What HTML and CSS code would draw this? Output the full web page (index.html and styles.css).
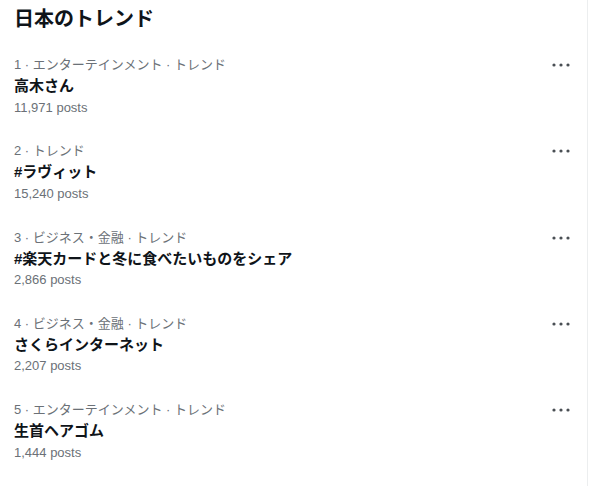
FILE: index.html
```html
<!DOCTYPE html>
<html lang="ja">
<head>
<meta charset="utf-8">
<title>日本のトレンド</title>
<link rel="stylesheet" href="styles.css">
</head>
<body>
<main class="panel">
  <h2 class="panel-title">日本のトレンド</h2>
  <ul class="trends">
    <li class="trend">
      <div class="trend-body">
        <div class="trend-meta">1 · エンターテインメント · トレンド</div>
        <div class="trend-name">高木さん</div>
        <div class="trend-count">11,971 posts</div>
      </div>
      <button class="more" aria-label="その他"><svg viewBox="0 0 18 4" width="18" height="4"><circle cx="2" cy="2" r="1.6"/><circle cx="9" cy="2" r="1.6"/><circle cx="16" cy="2" r="1.6"/></svg></button>
    </li>
    <li class="trend">
      <div class="trend-body">
        <div class="trend-meta">2 · トレンド</div>
        <div class="trend-name">#ラヴィット</div>
        <div class="trend-count">15,240 posts</div>
      </div>
      <button class="more" aria-label="その他"><svg viewBox="0 0 18 4" width="18" height="4"><circle cx="2" cy="2" r="1.6"/><circle cx="9" cy="2" r="1.6"/><circle cx="16" cy="2" r="1.6"/></svg></button>
    </li>
    <li class="trend">
      <div class="trend-body">
        <div class="trend-meta">3 · ビジネス・金融 · トレンド</div>
        <div class="trend-name">#楽天カードと冬に食べたいものをシェア</div>
        <div class="trend-count">2,866 posts</div>
      </div>
      <button class="more" aria-label="その他"><svg viewBox="0 0 18 4" width="18" height="4"><circle cx="2" cy="2" r="1.6"/><circle cx="9" cy="2" r="1.6"/><circle cx="16" cy="2" r="1.6"/></svg></button>
    </li>
    <li class="trend">
      <div class="trend-body">
        <div class="trend-meta">4 · ビジネス・金融 · トレンド</div>
        <div class="trend-name">さくらインターネット</div>
        <div class="trend-count">2,207 posts</div>
      </div>
      <button class="more" aria-label="その他"><svg viewBox="0 0 18 4" width="18" height="4"><circle cx="2" cy="2" r="1.6"/><circle cx="9" cy="2" r="1.6"/><circle cx="16" cy="2" r="1.6"/></svg></button>
    </li>
    <li class="trend">
      <div class="trend-body">
        <div class="trend-meta">5 · エンターテインメント · トレンド</div>
        <div class="trend-name">生首ヘアゴム</div>
        <div class="trend-count">1,444 posts</div>
      </div>
      <button class="more" aria-label="その他"><svg viewBox="0 0 18 4" width="18" height="4"><circle cx="2" cy="2" r="1.6"/><circle cx="9" cy="2" r="1.6"/><circle cx="16" cy="2" r="1.6"/></svg></button>
    </li>
  </ul>
</main>
</body>
</html>
```
FILE: styles.css
```css
html, body {
  margin: 0;
  padding: 0;
  background: #ffffff;
}

body {
  font-family: "Liberation Sans", "Noto Sans CJK JP", sans-serif;
  color: #0f1419;
}

.panel {
  width: 588px;
  min-height: 486px;
  box-sizing: border-box;
  border-right: 1px solid #eceeef;
}

.panel-title {
  margin: 0;
  padding: 7px 14px 11px;
  font-size: 20px;
  line-height: 24px;
  font-weight: 700;
}

.trends {
  list-style: none;
  margin: 0;
  padding: 0;
}

.trend {
  display: flex;
  align-items: flex-start;
  justify-content: space-between;
  padding: 12px 14px 0 14px;
  height: 74.25px;
}

.trend-body {
  display: flex;
  flex-direction: column;
}

.trend-meta {
  font-size: 13px;
  line-height: 21px;
  color: #6b7177;
}

.trend-name {
  font-size: 15px;
  line-height: 21.5px;
  font-weight: 700;
}

.trend-count {
  font-size: 13px;
  line-height: 21px;
  color: #6b7177;
}

.more {
  border: 0;
  background: none;
  padding: 0;
  margin: 9px 3px 0 0;
  width: 18px;
  height: 4px;
  display: flex;
}

.more svg {
  fill: #4a4f54;
}
```
